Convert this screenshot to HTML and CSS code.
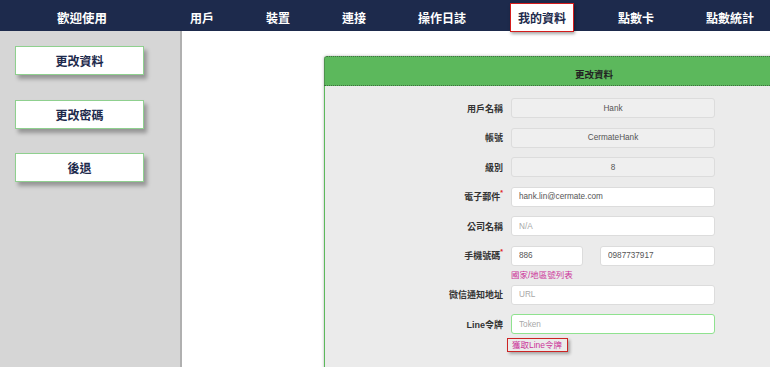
FILE: index.html
```html
<!DOCTYPE html>
<html lang="zh-Hant">
<head>
<meta charset="utf-8">
<title>更改資料</title>
<link rel="stylesheet" href="styles.css">
</head>
<body>
<header class="topbar">
  <div class="brand">歡迎使用</div>
  <nav class="nav">
    <a class="nav-item">用戶</a>
    <a class="nav-item">裝置</a>
    <a class="nav-item">連接</a>
    <a class="nav-item">操作日誌</a>
    <a class="nav-item active">我的資料</a>
    <a class="nav-item">點數卡</a>
    <a class="nav-item">點數統計</a>
  </nav>
</header>
<div class="layout">
  <aside class="sidebar">
    <button class="side-btn">更改資料</button>
    <button class="side-btn">更改密碼</button>
    <button class="side-btn">後退</button>
  </aside>
  <main class="content">
    <section class="panel">
      <div class="panel-head">更改資料</div>
      <div class="panel-body">
        <div class="form-row">
          <label class="form-label">用戶名稱</label>
          <input class="input input-readonly" value="Hank" readonly>
        </div>
        <div class="form-row">
          <label class="form-label">帳號</label>
          <input class="input input-readonly" value="CermateHank" readonly>
        </div>
        <div class="form-row">
          <label class="form-label">級別</label>
          <input class="input input-readonly" value="8" readonly>
        </div>
        <div class="form-row">
          <label class="form-label">電子郵件<span class="req">*</span></label>
          <input class="input" value="hank.lin@cermate.com">
        </div>
        <div class="form-row">
          <label class="form-label">公司名稱</label>
          <input class="input" placeholder="N/A">
        </div>
        <div class="form-row">
          <label class="form-label">手機號碼<span class="req">*</span></label>
          <div class="phone">
            <input class="input input-code" value="886">
            <input class="input input-number" value="0987737917">
          </div>
          <span></span>
          <a class="hint-link">國家/地區號列表</a>
        </div>
        <div class="form-row">
          <label class="form-label">微信通知地址</label>
          <input class="input" placeholder="URL">
        </div>
        <div class="form-row">
          <label class="form-label">Line令牌</label>
          <input class="input input-focus" placeholder="Token">
          <span></span>
          <div><a class="token-link">獲取Line令牌</a></div>
        </div>
      </div>
    </section>
  </main>
</div>
</body>
</html>
```
FILE: styles.css
```css
html, body {
  margin: 0;
  height: 100%;
  overflow: hidden;
}

body {
  font-family: "Liberation Sans", "Noto Sans CJK TC", sans-serif;
  background: #ffffff;
  display: flex;
  flex-direction: column;
}

.topbar {
  height: 31px;
  flex-shrink: 0;
  background: #1d2a4c;
  display: flex;
  position: relative;
  z-index: 2;
}

.brand {
  width: 164px;
  flex-shrink: 0;
  box-sizing: border-box;
  padding-top: 4px;
  display: flex;
  align-items: center;
  justify-content: center;
  color: #ffffff;
  font-weight: bold;
  font-size: 12.5px;
}

.nav {
  display: flex;
  flex-shrink: 0;
}

.nav-item {
  flex-shrink: 0;
  margin: 3px 18px 0;
  height: 29px;
  padding: 0 7px;
  box-sizing: border-box;
  display: flex;
  align-items: center;
  color: #ffffff;
  font-weight: bold;
  font-size: 12px;
  border: 1px solid transparent;
  white-space: nowrap;
}

.nav-item.active {
  background: #ffffff;
  color: #1d2a4c;
  border-color: #d41c1c;
  box-shadow: 1px 2px 3px rgba(0, 0, 0, 0.35);
}

.layout {
  flex: 1;
  display: flex;
  min-height: 0;
}

.sidebar {
  width: 182px;
  flex-shrink: 0;
  box-sizing: border-box;
  background: #d6d6d6;
  border-right: 2px solid #b0b0b0;
  padding: 15px 0 0 15px;
  display: flex;
  flex-direction: column;
  align-items: flex-start;
  gap: 24.5px;
}

.side-btn {
  width: 129px;
  height: 29px;
  box-sizing: border-box;
  background: #ffffff;
  border: 1px solid #8fd08f;
  box-shadow: 3px 4px 4px rgba(0, 0, 0, 0.3);
  font-family: "Liberation Sans", "Noto Sans CJK TC", sans-serif;
  font-weight: bold;
  font-size: 12px;
  color: #1d2a4c;
  padding: 0;
}

.content {
  flex: 1;
  min-width: 0;
  background: #ffffff;
  padding: 25px 0 0 142px;
  overflow: hidden;
}

.panel {
  width: 540px;
  border-radius: 3px 3px 0 0;
  box-shadow: 0 0 3px rgba(0, 0, 0, 0.3);
}

.panel-head {
  height: 30px;
  box-sizing: border-box;
  background: #5cb85c;
  border: 1px dotted #3f6f3f;
  border-radius: 3px 3px 0 0;
  padding-top: 6px;
  display: flex;
  align-items: center;
  justify-content: center;
  font-weight: bold;
  font-size: 9.5px;
  color: #222222;
}

.panel-body {
  background: #ebebeb;
  border-left: 1px solid #5cb85c;
  padding: 12px 0 60px;
  display: flex;
  flex-direction: column;
  gap: 9.5px;
}

.form-row {
  display: grid;
  grid-template-columns: 178px 204px;
  column-gap: 8px;
  align-items: center;
}

.form-label {
  text-align: right;
  font-weight: bold;
  font-size: 9px;
  color: #333333;
  white-space: nowrap;
}

.req {
  color: #e02424;
  font-size: 7px;
  vertical-align: top;
  position: relative;
  top: -1px;
}

.input {
  height: 20px;
  width: 100%;
  box-sizing: border-box;
  border: 1px solid #dcdcdc;
  border-radius: 3px;
  padding: 0 7px;
  margin: 0;
  font-family: "Liberation Sans", sans-serif;
  font-size: 8.2px;
  color: #555555;
  background: #ffffff;
  outline: none;
}

.input::placeholder {
  color: #a8a8a8;
}

.input-readonly {
  background: #efefef;
  text-align: center;
}

.input-focus {
  border-color: #8fe28f;
}

.phone {
  display: flex;
  gap: 17px;
}

.input-code {
  width: 72px;
}

.input-number {
  width: 115px;
}

.hint-link {
  display: block;
  margin-top: 5px;
  margin-bottom: -5px;
  line-height: 9.5px;
  font-size: 8.5px;
  color: #cc3399;
  white-space: nowrap;
}

.token-link {
  display: inline-block;
  margin-left: -4px;
  margin-top: -2px;
  padding: 0 5px 0 4px;
  line-height: 12px;
  border: 1px solid #cc2424;
  box-shadow: 2px 2px 3px rgba(0, 0, 0, 0.3);
  font-size: 8.5px;
  color: #cc3399;
  white-space: nowrap;
}
```
